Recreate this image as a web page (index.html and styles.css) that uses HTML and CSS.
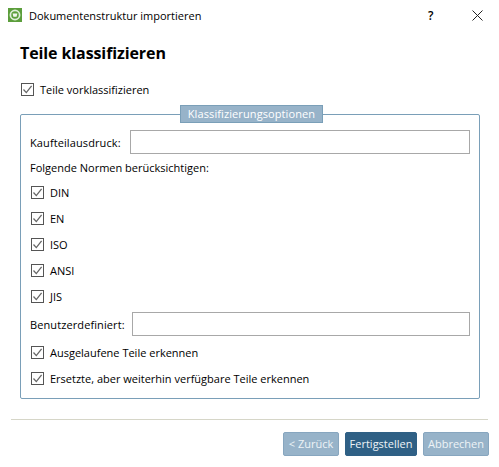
FILE: index.html
```html
<!DOCTYPE html>
<html lang="de">
<head>
    <meta charset="UTF-8">
    <title>Dokumentenstruktur importieren</title>
    <link rel="stylesheet" href="styles.css">
</head>
<body>
    <svg width="0" height="0" class="defs">
        <symbol id="check" viewBox="0 0 11 11">
            <path d="M1.5 5.5 L4.3 8.6 L9.6 1.8" fill="none" stroke="#666" stroke-width="1.3"/>
        </symbol>
    </svg>
    <div class="titlebar">
        <svg class="appicon" width="14" height="14" viewBox="0 0 14 14">
            <rect width="14" height="14" fill="#5c9e3c"/>
            <circle cx="7" cy="7" r="4.6" fill="none" stroke="#dfeeda" stroke-width="1.7"/>
            <path d="M4.6 5.6 H9.4 L8.6 8.8 H5.4 Z" fill="#f2f7ee"/>
        </svg>
        <span class="title">Dokumentenstruktur importieren</span>
        <span class="help">?</span>
        <svg class="close" width="11" height="11" viewBox="0 0 11 11">
            <path d="M0.5 0.5 L10.5 10.5 M10.5 0.5 L0.5 10.5" stroke="#222" stroke-width="1" fill="none"/>
        </svg>
    </div>
    <div class="content">
        <h1>Teile klassifizieren</h1>
        <label class="check top"><svg class="box"><use href="#check"/></svg>Teile vorklassifizieren</label>
        <fieldset class="group">
            <legend>Klassifizierungsoptionen</legend>
            <div class="field first">
                <span>Kaufteilausdruck:</span>
                <div class="input"></div>
            </div>
            <div class="text">Folgende Normen berücksichtigen:</div>
            <label class="check"><svg class="box"><use href="#check"/></svg>DIN</label>
            <label class="check"><svg class="box"><use href="#check"/></svg>EN</label>
            <label class="check"><svg class="box"><use href="#check"/></svg>ISO</label>
            <label class="check"><svg class="box"><use href="#check"/></svg>ANSI</label>
            <label class="check"><svg class="box"><use href="#check"/></svg>JIS</label>
            <div class="field">
                <span>Benutzerdefiniert:</span>
                <div class="input short"></div>
            </div>
            <label class="check"><svg class="box"><use href="#check"/></svg>Ausgelaufene Teile erkennen</label>
            <label class="check"><svg class="box"><use href="#check"/></svg>Ersetzte, aber weiterhin verfügbare Teile erkennen</label>
        </fieldset>
    </div>
    <div class="separator"></div>
    <div class="buttons">
        <div class="btn back">&lt; Zurück</div>
        <div class="btn primary">Fertigstellen</div>
        <div class="btn cancel">Abbrechen</div>
    </div>
</body>
</html>
```
FILE: styles.css
```css
html, body {
    margin: 0;
    padding: 0;
}
body {
    width: 499px;
    height: 467px;
    overflow: hidden;
    background: #fff;
    color: #000;
    font-family: "Open Sans", "Noto Sans", "Liberation Sans", sans-serif;
    font-size: 11px;
}
.defs {
    display: block;
    height: 0;
}
.titlebar {
    display: flex;
    align-items: center;
    height: 30px;
    padding-left: 8px;
}
.appicon {
    margin-right: 7px;
}
.title {
    width: 399px;
}
.help {
    width: 43px;
    font-size: 12px;
    font-weight: 600;
}
.close {
    display: block;
    margin-left: 1px;
}
.content {
    padding: 0 19px 0 20px;
}
h1 {
    margin: 0;
    padding-top: 13px;
    height: 26px;
    line-height: 20px;
    font-size: 16px;
    font-weight: 700;
    letter-spacing: -0.1px;
}
.check {
    display: flex;
    align-items: center;
    height: 26px;
    padding-left: 1px;
}
.check .box {
    width: 13px;
    height: 13px;
    margin-right: 6px;
    border: 1px solid #555;
    box-sizing: border-box;
}
.check.top {
    margin-top: 7px;
    height: 26px;
}
.group {
    margin: 3px 0 0;
    padding: 0 9px;
    height: 294px;
    box-sizing: border-box;
    border: 1px solid #7a9fb8;
    border-radius: 2px;
}
legend {
    margin: 0 147px 0 auto;
    padding: 0;
    width: 143px;
    height: 18px;
    line-height: 16px;
    box-sizing: border-box;
    text-align: center;
    letter-spacing: 0.1px;
    background: #97b3c9;
    border: 1px solid #7a9fb8;
    color: #fff;
}
.field {
    display: flex;
    align-items: center;
    justify-content: space-between;
    height: 24px;
    letter-spacing: 0.1px;
}
.field.first {
    margin-top: 7px;
}
.input {
    flex: none;
    width: 340px;
    height: 24px;
    box-sizing: border-box;
    border: 1px solid #a8a8a8;
}
.input.short {
    width: 338px;
}
.field + .check {
    margin-top: 3px;
}
.text {
    height: 25px;
    line-height: 27px;
}
.check + .field {
    margin-top: 3px;
}
.separator {
    margin: 20px 11px 0;
    height: 1px;
    background: #d6d6c8;
}
.buttons {
    display: flex;
    justify-content: flex-end;
    gap: 6px;
    margin-top: 12px;
    padding-right: 10px;
}
.btn {
    height: 24px;
    line-height: 22px;
    box-sizing: border-box;
    text-align: center;
    border-radius: 2px;
    color: #eef3f7;
    background: #97b3c9;
    border: 1px solid #87a6bf;
}
.back {
    width: 56px;
}
.primary {
    width: 72px;
    background: #2f6085;
    border-color: #2f6085;
}
.cancel {
    width: 66px;
}
```
